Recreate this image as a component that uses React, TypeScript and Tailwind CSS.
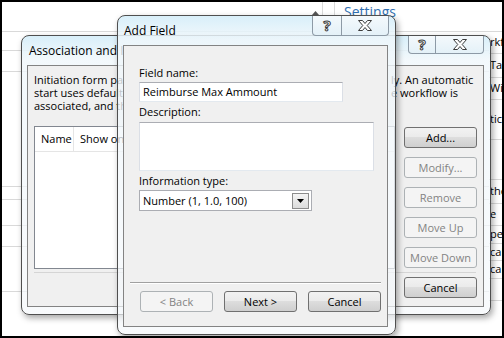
import React from 'react';

const btn =
  'h-[21px] w-[73px] rounded-[3px] border text-[11px] leading-none flex items-center justify-center';
const btnOn =
  btn + ' border-[#707070] text-black bg-[linear-gradient(#f2f2f2_0%,#ebebeb_45%,#dddddd_50%,#cfcfcf_100%)]';
const btnOff = btn + ' border-[#adb2b5] text-[#838383] bg-[#f4f4f4]';

function Btn({ label, off }: { label: string; off?: boolean }) {
  return <div className={off ? btnOff : btnOn}>{label}</div>;
}

function CloseGlyph() {
  return (
    <svg width="14" height="11" viewBox="0 0 14 11">
      <polygon
        points="0.5,0.5 4.5,0.5 7,3.5 9.5,0.5 13.5,0.5 9.2,5.5 13.5,10.5 9.5,10.5 7,7.5 4.5,10.5 0.5,10.5 4.8,5.5"
        fill="#fff"
        stroke="#3c3c3c"
        strokeWidth="1"
      />
    </svg>
  );
}

function TitleButtons({ h, helpW, closeW }: { h: number; helpW: number; closeW: number }) {
  return (
    <div
      className="flex rounded-b-[4px] border border-t-0 border-[#8d9aa6] bg-[linear-gradient(#f4f9fc,#e4f1f8)]"
      style={{ height: h }}
    >
      <div
        className="flex items-center justify-center border-r border-[#8d9aa6] text-[15px] font-bold text-white [-webkit-text-stroke:1px_#3c3c3c]"
        style={{ width: helpW }}
      >
        ?
      </div>
      <div className="flex items-center justify-center" style={{ width: closeW }}>
        <CloseGlyph />
      </div>
    </div>
  );
}

const frame =
  'absolute flex flex-col rounded-[8px] border border-[#4f4f4f] bg-[linear-gradient(180deg,#d6eef9f0_0px,#f0f7fbd0_24px,#f5f8fbb0_100%)] shadow-[2px_3px_6px_rgba(0,0,0,0.35)]';

function AssociationDialog() {
  return (
    <div className={frame + ' left-[19px] top-[33px] h-[280px] w-[470px]'}>
      <div className="relative flex h-[29px] items-center pl-[7px] text-[12px] text-black">
        Association and Initiation Form Parameters
        <div className="absolute right-[6px] top-0">
          <TitleButtons h={18} helpW={27} closeW={47} />
        </div>
      </div>
      <div className="mb-[7px] ml-[5px] mr-[6px] flex flex-1 flex-col border border-[#838383] bg-[#f0f0f0] px-[6px] pt-[7px] text-[11px] text-black">
        <div className="flex leading-[13px]">
          <div className="w-[357px] overflow-hidden whitespace-nowrap">
            <div>Initiation form parameters are shown to users when they start the</div>
            <div>start uses default values for the form parameters when the</div>
            <div>associated, and the workflow starts automatically.</div>
          </div>
          <div className="whitespace-nowrap">
            <div>ly. An automatic</div>
            <div>e workflow is</div>
          </div>
        </div>
        <div className="mt-[14px] flex gap-[9px]">
          <div className="h-[143px] flex-1 border border-[#828790] bg-white">
            <div className="flex h-[25px] border-b border-[#e5e5e5]">
              <div className="flex w-[39px] items-center border-r border-[#e5e5e5] pl-[6px]">Name</div>
              <div className="flex items-center whitespace-nowrap pl-[6px]">Show on initiation form</div>
            </div>
          </div>
          <div className="mt-[1px] flex w-[73px] flex-col gap-[9px]">
            <Btn label="Add..." />
            <Btn label="Modify..." off />
            <Btn label="Remove" off />
            <Btn label="Move Up" off />
            <Btn label="Move Down" off />
          </div>
        </div>
        <div className="mr-[1px] mt-[3px] border-t border-[#d5d5d5]" />
        <div className="mt-[4px] flex justify-end">
          <Btn label="Cancel" />
        </div>
      </div>
    </div>
  );
}

function AddFieldDialog() {
  return (
    <div className={frame + ' left-[115px] top-[13px] h-[320px] w-[279px]'}>
      <div className="relative flex h-[29px] items-center pl-[6px] text-[12px] text-black">
        Add Field
        <div className="absolute right-[6px] top-0">
          <TitleButtons h={20} helpW={29} closeW={46} />
        </div>
      </div>
      <div className="mb-[7px] ml-[5px] mr-[7px] flex flex-1 flex-col border border-[#838383] bg-[#f0f0f0] text-[11px] leading-[16px] text-black">
        <div className="flex flex-col items-start pl-[15px] pt-[19px]">
          <div>Field name:</div>
          <div className="mt-[1px] flex h-[20px] w-[204px] items-center border border-[#abadb3] border-x-[#dbdfe6] border-b-[#e3e9ef] bg-white pl-[3px]">
            Reimburse Max Ammount
          </div>
          <div className="mt-[2px]">Description:</div>
          <div className="mt-[2px] h-[49px] w-[235px] border border-[#abadb3] border-x-[#dbdfe6] border-b-[#e3e9ef] bg-white" />
          <div className="mt-[2px]">Information type:</div>
          <div className="mt-[1px] flex h-[21px] w-[173px] items-center justify-between border border-[#abadb3] bg-white pl-[3px] pr-[2px]">
            <span>Number (1, 1.0, 100)</span>
            <div className="flex h-[16px] w-[17px] items-center justify-center border border-[#8c8c8c] bg-[linear-gradient(#f4f4f4,#dcdcdc)]">
              <svg width="7" height="4" viewBox="0 0 7 4">
                <polygon points="0,0 7,0 3.5,4" fill="#000" />
              </svg>
            </div>
          </div>
        </div>
        <div className="flex-1" />
        <div className="mx-[6px] border-b border-t border-[#a0a0a0] border-b-white" />
        <div className="mb-[14px] mt-[7px] flex justify-end gap-[11px] pr-[6px]">
          <Btn label="< Back" off />
          <Btn label="Next >" />
          <Btn label="Cancel" />
        </div>
      </div>
    </div>
  );
}

const leftRows = [19, 21, 115, 13, 26, 21, 45, 45];
const rightRows: [number, string][] = [
  [22, 'rkflow'],
  [24, 'Task'],
  [22, 'Wi'],
  [40, 'tic'],
  [40, ''],
  [24, 'the'],
  [22, 'e'],
  [18, 'pe'],
  [17, 'cal'],
  [18, 'cal'],
  [22, ''],
];

export default function App() {
  return (
    <div className="relative h-[338px] w-[504px] overflow-hidden border-2 border-black bg-white font-['Open_Sans',sans-serif]">
      <div className="flex h-full flex-col">
        <div className="flex h-[30px] shrink-0 border-b border-[#d9d9d9]">
          <div className="w-[306px]" />
          <div className="flex w-[14px] items-start justify-center pt-[9px]">
            <svg width="7" height="4" viewBox="0 0 7 4">
              <polygon points="3.5,0 7,4 0,4" fill="#555" />
            </svg>
          </div>
          <div className="w-[13px] border-l border-r border-[#d9d9d9]" />
          <div className="pl-[9px] pt-[1px] text-[14px] leading-[18px] text-[#2f6fb1]">Settings</div>
        </div>
        <div className="flex flex-1">
          <div className="flex flex-1 flex-col">
            {leftRows.map((h, i) => (
              <div key={i} className="shrink-0 border-b border-[#d9d9d9]" style={{ height: h }} />
            ))}
          </div>
          <div className="flex w-[13px] flex-col overflow-hidden text-[11px] text-black">
            {rightRows.map(([h, t], i) => (
              <div
                key={i}
                className="flex shrink-0 items-center whitespace-nowrap border-b border-[#d9d9d9] pl-[1px]"
                style={{ height: h }}
              >
                {t}
              </div>
            ))}
          </div>
        </div>
      </div>
      <AssociationDialog />
      <AddFieldDialog />
    </div>
  );
}
